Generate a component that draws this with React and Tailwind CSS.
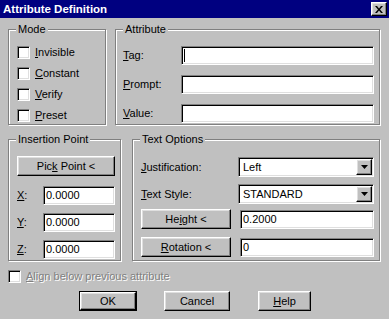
const raised =
  "bg-[#c0c0c0] border border-t-white border-l-white border-r-black border-b-black shadow-[inset_-1px_-1px_0_#808080,inset_1px_1px_0_#dfdfdf]";
const sunken =
  "bg-white border border-t-[#808080] border-l-[#808080] border-r-white border-b-white shadow-[inset_1px_1px_0_#000,inset_-1px_-1px_0_#dfdfdf]";
const etched =
  "relative border border-[#808080] shadow-[inset_1px_1px_0_#fff,1px_1px_0_#fff]";

function Group({ title, className, children }) {
  return (
    <div className={`${etched} ${className}`}>
      <span className="absolute -top-[7px] left-[7px] px-[2px] bg-[#c0c0c0] leading-[13px]">
        {title}
      </span>
      {children}
    </div>
  );
}

function Check({ children, disabled }) {
  return (
    <div className="flex items-center h-[13px] gap-[5px]">
      <div
        className={`w-[13px] h-[13px] shrink-0 ${sunken} ${
          disabled ? "bg-[#c0c0c0]" : ""
        }`}
      />
      <span
        className={
          disabled
            ? "text-[#808080] [text-shadow:1px_1px_0_#fff] leading-[13px]"
            : "leading-[13px]"
        }
      >
        {children}
      </span>
    </div>
  );
}

function Field({ value, className, cursor }) {
  return (
    <div className={`${sunken} ${className} flex items-center pl-[2px] leading-[13px]`}>
      {cursor && <span className="w-[1px] h-[13px] bg-black" />}
      {value}
    </div>
  );
}

function Combo({ value }) {
  return (
    <div className={`${sunken} w-[136px] h-[20px] flex p-[1px]`}>
      <span className="flex-1 pl-[3px] flex items-center leading-[13px]">{value}</span>
      <div className={`${raised} w-[16px] h-full flex items-center justify-center`}>
        <svg width="7" height="4" viewBox="0 0 7 4">
          <path d="M0 0h7L3.5 4z" fill="#000" />
        </svg>
      </div>
    </div>
  );
}

function Btn({ children, className }) {
  return (
    <div className={`${raised} ${className} flex items-center justify-center leading-[13px]`}>
      <span>{children}</span>
    </div>
  );
}

export default function App() {
  return (
    <div className="w-[389px] h-[319px] bg-[#c0c0c0] overflow-hidden text-[11px] text-black font-['Liberation_Sans',Arial,sans-serif]">
      <div className="h-[18px] bg-[#000080] flex items-center justify-between pl-[3px] pr-[2px]">
        <span className="text-white font-bold text-[11.5px] leading-[14px]">
          Attribute Definition
        </span>
        <div className={`${raised} w-[16px] h-[14px] flex items-center justify-center`}>
          <svg width="8" height="7" viewBox="0 0 8 7">
            <path d="M0 0h2l2 2.5L6 0h2L5 3.5 8 7H6L4 4.5 2 7H0l3-3.5z" fill="#000" />
          </svg>
        </div>
      </div>

      <div className="px-[8px]">
        <div className="mt-[11px] flex">
          <Group title="Mode" className="w-[98px] h-[96px]">
            <div className="flex flex-col gap-[8px] pt-[16px] pl-[8px]">
              <Check><u>I</u>nvisible</Check>
              <Check><u>C</u>onstant</Check>
              <Check><u>V</u>erify</Check>
              <Check><u>P</u>reset</Check>
            </div>
          </Group>
          <Group title="Attribute" className="ml-[9px] w-[265px] h-[96px]">
            <div className="flex flex-col gap-[10px] pt-[16px] pl-[7px]">
              <div className="flex items-center h-[19px]">
                <span className="w-[58px]"><u>T</u>ag:</span>
                <Field className="w-[193px] h-[19px]" cursor />
              </div>
              <div className="flex items-center h-[19px]">
                <span className="w-[58px]"><u>P</u>rompt:</span>
                <Field className="w-[193px] h-[19px]" />
              </div>
              <div className="flex items-center h-[19px]">
                <span className="w-[58px]"><u>V</u>alue:</span>
                <Field className="w-[193px] h-[19px]" />
              </div>
            </div>
          </Group>
        </div>

        <div className="mt-[14px] flex">
          <Group title="Insertion Point" className="w-[113px] h-[122px]">
            <div className="pt-[16px] pl-[8px]">
              <Btn className="w-[98px] h-[20px]">
                Pic<u>k</u> Point &lt;
              </Btn>
              <div className="mt-[10px] flex flex-col gap-[8px]">
                {["X", "Y", "Z"].map((l) => (
                  <div key={l} className="flex items-center h-[19px]">
                    <span className="w-[26px]"><u>{l}</u>:</span>
                    <Field className="w-[72px] h-[19px]" value="0.0000" />
                  </div>
                ))}
              </div>
            </div>
          </Group>
          <Group title="Text Options" className="ml-[11px] w-[248px] h-[122px]">
            <div className="pt-[17px] pl-[8px]">
              <div className="flex items-center h-[20px]">
                <span className="w-[97px]"><u>J</u>ustification:</span>
                <Combo value="Left" />
              </div>
              <div className="mt-[7px] flex items-center h-[20px]">
                <span className="w-[97px]"><u>T</u>ext Style:</span>
                <Combo value="STANDARD" />
              </div>
              <div className="mt-[5px] flex items-center h-[20px]">
                <Btn className="w-[90px] h-[20px]">
                  He<u>i</u>ght &lt;
                </Btn>
                <Field className="ml-[9px] w-[134px] h-[19px]" value="0.2000" />
              </div>
              <div className="mt-[8px] flex items-center h-[20px]">
                <Btn className="w-[90px] h-[20px]">
                  <u>R</u>otation &lt;
                </Btn>
                <Field className="ml-[9px] w-[134px] h-[19px]" value="0" />
              </div>
            </div>
          </Group>
        </div>

        <div className="mt-[9px] flex">
          <Check disabled>
            <u>A</u>lign below previous attribute
          </Check>
        </div>

        <div className="mt-[8px] flex">
          <div className="ml-[71px] w-[58px] h-[20px] border border-black flex">
            <Btn className="flex-1">OK</Btn>
          </div>
          <Btn className="ml-[27px] w-[66px] h-[20px]">Cancel</Btn>
          <Btn className="ml-[28px] w-[53px] h-[20px]">
            <u>H</u>elp
          </Btn>
        </div>
      </div>
    </div>
  );
}
